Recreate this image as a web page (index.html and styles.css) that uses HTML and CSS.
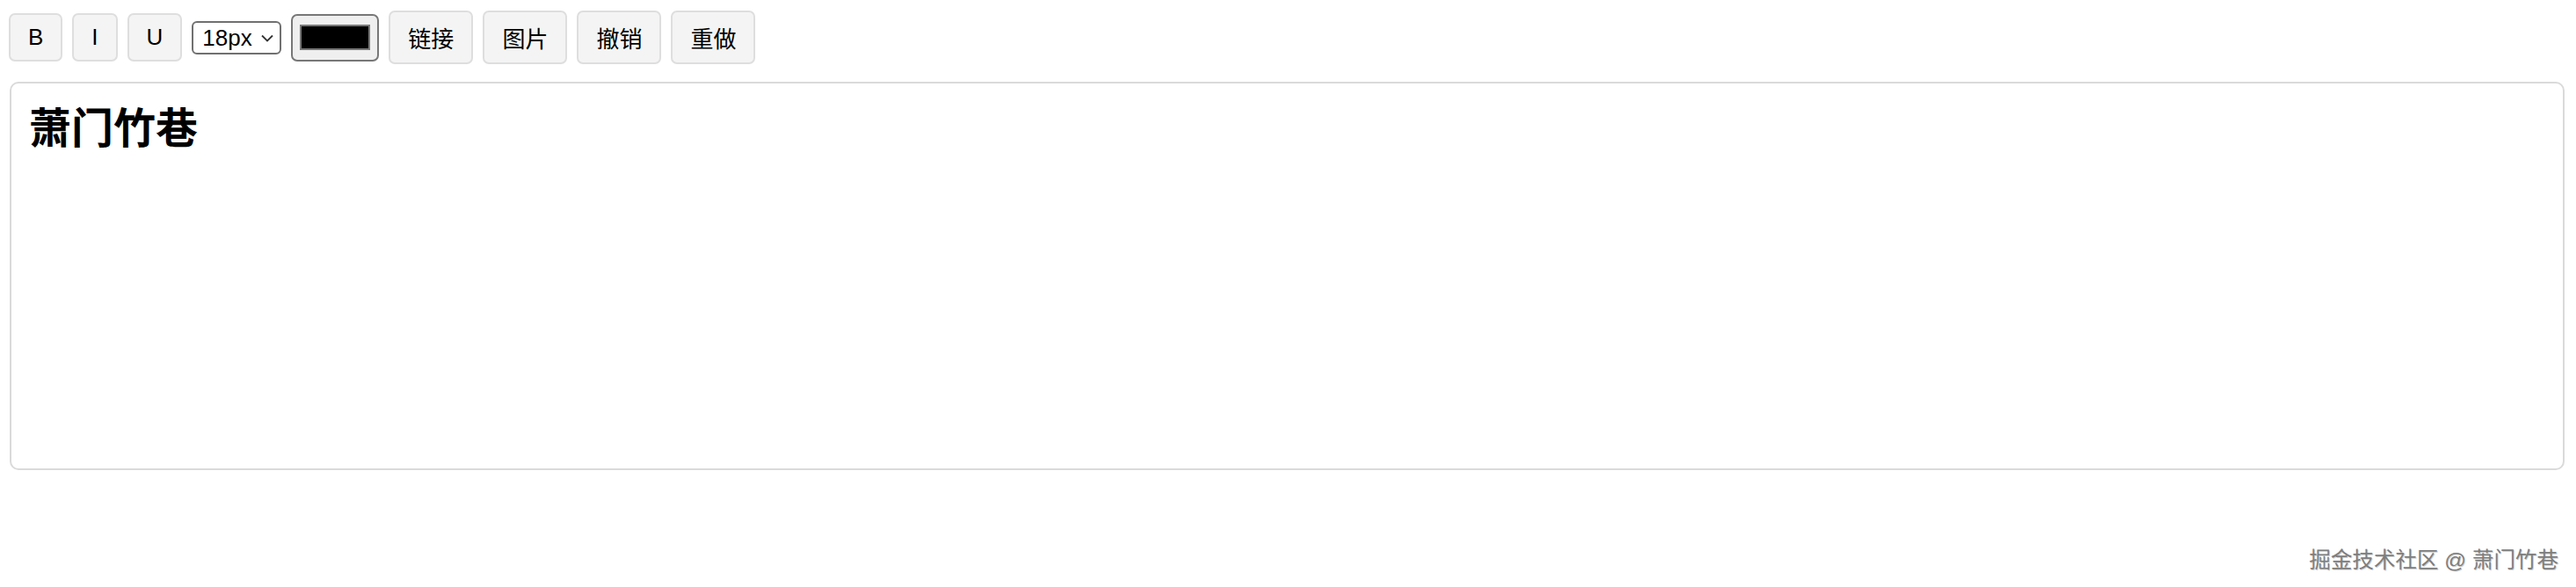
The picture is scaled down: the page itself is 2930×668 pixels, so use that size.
FILE: index.html
```html
<!DOCTYPE html>
<html lang="zh-CN">
<head>
<meta charset="utf-8">
<title>编辑器</title>
<link rel="stylesheet" href="styles.css">
</head>
<body>
<div class="page">
  <div class="toolbar">
    <button class="btn">B</button>
    <button class="btn">I</button>
    <button class="btn">U</button>
    <span class="select-wrap">
      <select class="size-select">
        <option>18px</option>
      </select>
      <svg class="chevron" width="14" height="9" viewBox="0 0 14 9"><path d="M1 1.5 L7 7.5 L13 1.5" fill="none" stroke="#333" stroke-width="1.8"/></svg>
    </span>
    <button class="color-btn"><span class="swatch"></span></button>
    <button class="btn">链接</button>
    <button class="btn">图片</button>
    <button class="btn">撤销</button>
    <button class="btn">重做</button>
  </div>
  <div class="editor" contenteditable="true">
    <h2 class="title">萧门竹巷</h2>
  </div>
  <div class="watermark">掘金技术社区 @ 萧门竹巷</div>
</div>
</body>
</html>
```
FILE: styles.css
```css
html, body {
  margin: 0;
  padding: 0;
  background: #ffffff;
}

.page {
  position: relative;
  width: 2930px;
  height: 668px;
  font-family: "Liberation Sans", "Noto Sans CJK SC", sans-serif;
  color: #000;
}

.toolbar {
  display: flex;
  align-items: center;
  gap: 11px;
  padding: 12px 0 0 10px;
}

.btn {
  font-family: "Liberation Sans", "Noto Sans CJK SC", sans-serif;
  font-size: 26px;
  color: #000;
  background: #f4f4f4;
  border: 2px solid #dedede;
  border-radius: 7px;
  padding: 10px 20px;
  margin: 0;
}

.select-wrap {
  position: relative;
  display: inline-flex;
}

.size-select {
  appearance: none;
  -webkit-appearance: none;
  font-family: "Liberation Sans", sans-serif;
  font-size: 26px;
  color: #000;
  background: #fff;
  border: 2px solid #707070;
  border-radius: 6px;
  width: 102px;
  height: 38px;
  padding: 0 0 0 10px;
  margin: 0;
}

.chevron {
  position: absolute;
  right: 9px;
  top: 15px;
  pointer-events: none;
}

.color-btn {
  display: flex;
  align-items: center;
  justify-content: center;
  width: 100px;
  height: 54px;
  background: #efefef;
  border: 2px solid #777;
  border-radius: 7px;
  padding: 0;
  margin: 0;
}

.swatch {
  display: block;
  width: 80px;
  height: 29px;
  box-sizing: border-box;
  background: #000;
  border: 2px solid #777;
}

.editor {
  margin: 20px 13px 0 11px;
  height: 442px;
  box-sizing: border-box;
  border: 2px solid #dadada;
  border-radius: 10px;
  padding: 19px 20px;
  outline: none;
}

.title {
  margin: 0;
  font-family: "Noto Sans CJK SC", sans-serif;
  font-size: 48px;
  line-height: 1.2;
  font-weight: 700;
}

.watermark {
  position: absolute;
  right: 20px;
  bottom: 16px;
  font-family: "Liberation Sans", "Noto Sans CJK SC", sans-serif;
  font-size: 24.5px;
  line-height: 1.2;
  color: #7e7e7e;
  text-shadow: 1px 1px 0 rgba(0, 0, 0, 0.2);
}
```
